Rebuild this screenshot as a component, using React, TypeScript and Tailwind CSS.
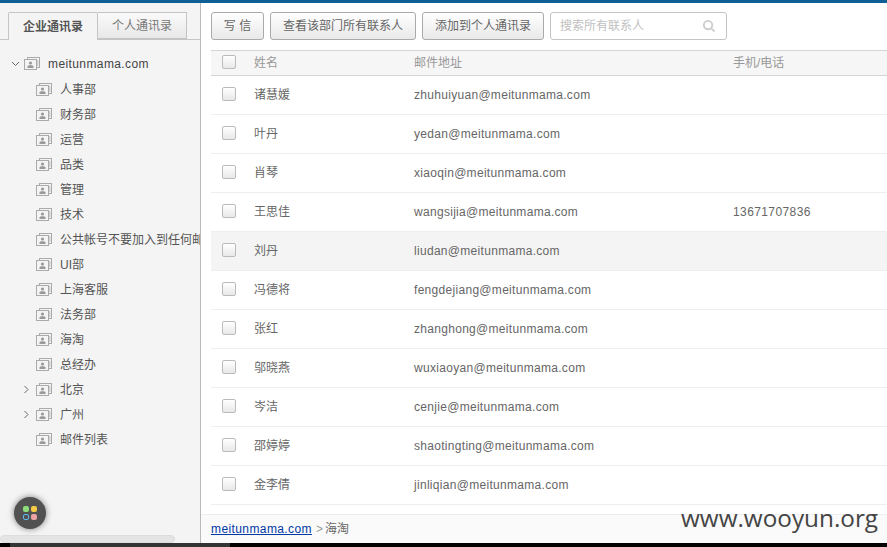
const font = "font-['Liberation_Sans','Noto_Sans_CJK_SC',sans-serif]";

function CardIcon() {
  return (
    <svg width="16" height="13" viewBox="0 0 16 13" className="shrink-0">
      <rect x="3.5" y="0.5" width="12" height="10" fill="#f4f4f4" stroke="#aaa" />
      <rect x="0.5" y="2.5" width="12" height="10" fill="#f4f4f4" stroke="#aaa" />
      <circle cx="6.5" cy="6" r="1.6" fill="#999" />
      <path d="M3.5 11v-1.5c0-.8 1.5-1.2 3-1.2s3 .4 3 1.2V11z" fill="#999" />
      <path d="M13 4h1.5M13 6h1.5M13 8h1.5" stroke="#aaa" />
    </svg>
  );
}

function Chevron({ open }: { open?: boolean }) {
  return (
    <svg width="9" height="9" viewBox="0 0 9 9" className="shrink-0" fill="none" stroke="#666" strokeWidth="1">
      {open ? <path d="M1 3l3.5 3.5L8 3" /> : <path d="M2.5 1L6 4.5 2.5 8" />}
    </svg>
  );
}

const depts: { name: string; arrow?: boolean }[] = [
  { name: "人事部" }, { name: "财务部" }, { name: "运营" }, { name: "品类" }, { name: "管理" },
  { name: "技术" }, { name: "公共帐号不要加入到任何邮件列表" }, { name: "UI部" }, { name: "上海客服" },
  { name: "法务部" }, { name: "海淘" }, { name: "总经办" }, { name: "北京", arrow: true },
  { name: "广州", arrow: true }, { name: "邮件列表" },
];

const rows = [
  ["诸慧媛", "zhuhuiyuan@meitunmama.com", ""],
  ["叶丹", "yedan@meitunmama.com", ""],
  ["肖琴", "xiaoqin@meitunmama.com", ""],
  ["王思佳", "wangsijia@meitunmama.com", "13671707836"],
  ["刘丹", "liudan@meitunmama.com", ""],
  ["冯德将", "fengdejiang@meitunmama.com", ""],
  ["张红", "zhanghong@meitunmama.com", ""],
  ["邬晓燕", "wuxiaoyan@meitunmama.com", ""],
  ["岑洁", "cenjie@meitunmama.com", ""],
  ["邵婷婷", "shaotingting@meitunmama.com", ""],
  ["金李倩", "jinliqian@meitunmama.com", ""],
];

function Check() {
  return <span className="block w-[14px] h-[14px] -mt-[3px] rounded-[2px] border border-[#bbb] bg-gradient-to-b from-white to-[#e8e8e8] shrink-0" />;
}

function Btn({ children, w }: { children: React.ReactNode; w: string }) {
  return (
    <button className={`h-[28px] ${w} rounded-[3px] border border-[#aaa] bg-gradient-to-b from-white to-[#e9e9e9] text-[12px] text-[#666] shrink-0`}>
      {children}
    </button>
  );
}

export default function App() {
  return (
    <div className={`relative w-[887px] h-[547px] overflow-hidden flex flex-col bg-white ${font}`}>
      <div className="h-[3px] bg-[#0e5f96] shrink-0" />
      <div className="flex-1 min-h-0 flex">
        <aside className="relative w-[201px] shrink-0 bg-[#f4f4f4] border-r border-[#b9b9b9] overflow-hidden">
          <div className="h-[37px] pt-[9px] pl-[8px] border-b border-[#c4c4c4] flex">
            <div className="w-[90px] h-[28px] border border-[#c4c4c4] border-b-0 bg-[#f4f4f4] rounded-t-[2px] flex items-center justify-center text-[12px] font-bold text-[#555]">企业通讯录</div>
            <div className="w-[89px] h-[27px] border border-[#c4c4c4] border-l-0 bg-gradient-to-b from-[#fafafa] to-[#e8e8e8] flex items-center justify-center text-[12px] text-[#777]">个人通讯录</div>
          </div>
          <div className="pt-[11px]">
            <div className="h-[25px] mb-[1px] flex items-center pl-[11px] text-[#444] text-[12px] tracking-[0.4px]">
              <Chevron open />
              <span className="ml-[4px]"><CardIcon /></span>
              <span className="ml-[8px]">meitunmama.com</span>
            </div>
            {depts.map((d) => (
              <div key={d.name} className="h-[25px] flex items-center pl-[36px] relative text-[12px] text-[#555] whitespace-nowrap">
                {d.arrow && <span className="absolute left-[22px] top-[8px]"><Chevron /></span>}
                <CardIcon />
                <span className="ml-[8px]">{d.name}</span>
              </div>
            ))}
          </div>
          <div className="absolute left-0 bottom-0 w-[175px] h-[8px] rounded-[4px] bg-[#e4e4e4] border border-[#ddd]" />
          <div className="absolute left-[14px] top-[494px] w-[32px] h-[32px] rounded-full bg-[#515151] shadow-[0_0_6px_rgba(0,0,0,0.5)] grid grid-cols-2 gap-[2px] p-[9px] place-content-center">
            <span className="w-[6px] h-[6px] rounded-[2px] bg-[#8fdc7c]" />
            <span className="w-[6px] h-[6px] rounded-[2px] bg-[#f7c948]" />
            <span className="w-[6px] h-[6px] rounded-[2px] border border-[#63b8ee]" />
            <span className="w-[6px] h-[6px] rounded-[2px] bg-[#eba3a3]" />
          </div>
        </aside>
        <main className="flex-1 min-w-0 flex flex-col">
          <div className="h-[47px] pt-[9px] pl-[10px] flex gap-[6px] shrink-0">
            <Btn w="w-[53px]">写 信</Btn>
            <Btn w="w-[146px]">查看该部门所有联系人</Btn>
            <Btn w="w-[122px]">添加到个人通讯录</Btn>
            <div className="w-[177px] h-[28px] rounded-[3px] border border-[#c4c4c4] flex items-center justify-between pl-[9px] pr-[10px] text-[12px] text-[#c0c0c0]">
              <span>搜索所有联系人</span>
              <svg width="14" height="14" viewBox="0 0 15 15" fill="none" stroke="#ccc" strokeWidth="2">
                <circle cx="6.5" cy="6.5" r="4.5" />
                <path d="M10 10l3.5 3.5" />
              </svg>
            </div>
          </div>
          <div className="flex-1 min-h-0 pl-[10px] overflow-hidden">
            <div className="h-[26px] bg-[#f6f6f6] border-y border-[#d4d4d4] flex items-center text-[12px] text-[#999]">
              <span className="w-[43px] pl-[11px]"><Check /></span>
              <span className="w-[160px]">姓名</span>
              <span className="w-[319px]">邮件地址</span>
              <span>手机/电话</span>
            </div>
            {rows.map((r) => (
              <div key={r[0]} className={`h-[39px] border-b border-[#eee] flex items-center text-[12px] text-[#666] tracking-[0.3px] ${r[0] === "刘丹" ? "bg-[#f4f4f4]" : ""}`}>
                <span className="w-[43px] pl-[11px]"><Check /></span>
                <span className="w-[160px] tracking-normal">{r[0]}</span>
                <span className="w-[319px]">{r[1]}</span>
                <span className="tracking-[0.4px]">{r[2]}</span>
              </div>
            ))}
          </div>
          <div className="h-[29px] bg-[#fafafa] border-t border-[#eee] pl-[10px] flex items-center text-[12px] text-[#666] shrink-0">
            <a href="#" className="text-[#0039a6] underline tracking-[0.4px]">meitunmama.com</a>
            <span className="ml-[4px] text-[#999]">&gt;</span>
            <span className="ml-[2px]">海淘</span>
          </div>
        </main>
      </div>
      <div className="h-[4px] bg-black shrink-0 pl-[10px]">
        <div className="w-[220px] h-full bg-[#333]" />
      </div>
      <div className="absolute left-[681px] top-[502px] text-[24.3px] leading-[32px] text-[#444] font-['Open_Sans',sans-serif]">www.wooyun.org</div>
    </div>
  );
}
